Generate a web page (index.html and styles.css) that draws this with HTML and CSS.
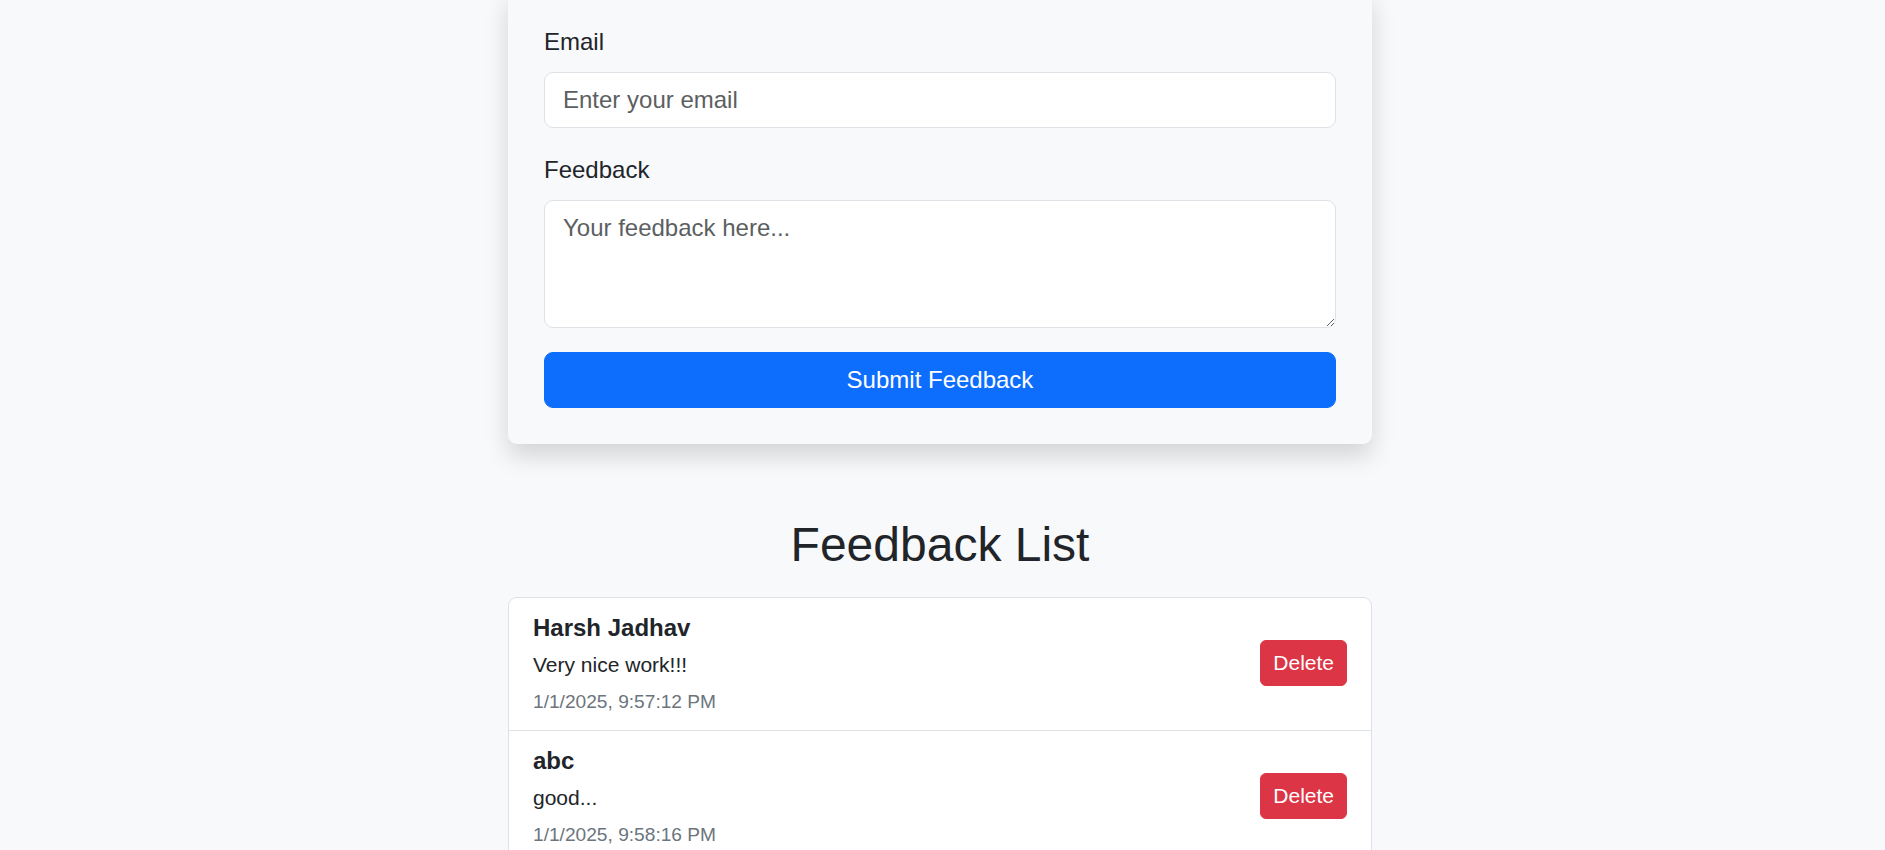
FILE: index.html
```html
<!DOCTYPE html>
<html lang="en">
<head>
<meta charset="utf-8">
<title>Feedback</title>
<link rel="stylesheet" href="styles.css">
</head>
<body>
<div class="page">
  <form class="form-card">
    <div class="field">
      <label class="field-label" for="email">Email</label>
      <input class="field-input" id="email" type="email" placeholder="Enter your email">
    </div>
    <div class="field">
      <label class="field-label" for="feedback">Feedback</label>
      <textarea class="field-input field-textarea" id="feedback" placeholder="Your feedback here..."></textarea>
    </div>
    <button class="btn-submit" type="button">Submit Feedback</button>
  </form>

  <h2 class="list-title">Feedback List</h2>

  <ul class="feedback-list">
    <li class="feedback-item">
      <div class="feedback-body">
        <div class="feedback-name">Harsh Jadhav</div>
        <div class="feedback-text">Very nice work!!!</div>
        <div class="feedback-date">1/1/2025, 9:57:12 PM</div>
      </div>
      <button class="btn-delete" type="button">Delete</button>
    </li>
    <li class="feedback-item">
      <div class="feedback-body">
        <div class="feedback-name">abc</div>
        <div class="feedback-text">good...</div>
        <div class="feedback-date">1/1/2025, 9:58:16 PM</div>
      </div>
      <button class="btn-delete" type="button">Delete</button>
    </li>
  </ul>
</div>
</body>
</html>
```

FILE: styles.css
```css
html {
  overflow: hidden;
}

body {
  margin: 0;
  padding: 0 5px 0 0;
  background: #f8f9fa;
  color: #212529;
  font-family: "Liberation Sans", Arial, sans-serif;
  font-size: 24px;
  line-height: 1.5;
}

.page {
  width: 864px;
  margin: 0 auto;
}

.form-card {
  margin: -12px 0 0;
  padding: 36px;
  background: #f8f9fa;
  border-radius: 9px;
  box-shadow: 0 12px 24px rgba(0, 0, 0, 0.15);
}

.field {
  margin-bottom: 24px;
}

.field-label {
  display: block;
  margin-bottom: 12px;
  font-size: 24px;
  line-height: 36px;
  color: #212529;
}

.field-input {
  display: block;
  box-sizing: border-box;
  width: 100%;
  height: 56px;
  margin: 0;
  padding: 9px 18px;
  font-family: inherit;
  font-size: 24px;
  line-height: 36px;
  color: #212529;
  background: #fff;
  border: 1px solid #dee2e6;
  border-radius: 9px;
  outline: none;
}

.field-input::placeholder {
  color: #5c5f62;
  opacity: 1;
}

.field-textarea {
  height: 128px;
  resize: vertical;
}

.btn-submit {
  display: block;
  box-sizing: border-box;
  width: 100%;
  height: 56px;
  margin: 0;
  padding: 9px 18px;
  font-family: inherit;
  font-size: 24px;
  line-height: 36px;
  color: #fff;
  background: #0d6efd;
  border: 1px solid #0d6efd;
  border-radius: 9px;
  cursor: pointer;
}

.list-title {
  margin: 72px 0 23px;
  font-size: 48px;
  font-weight: 400;
  line-height: 57.6px;
  text-align: center;
  color: #212529;
}

.feedback-list {
  list-style: none;
  margin: 0;
  padding: 0;
  background: #fff;
  border: 1px solid #dee2e6;
  border-radius: 9px;
}

.feedback-item {
  display: flex;
  align-items: center;
  justify-content: space-between;
  padding: 12px 24px 14px;
}

.feedback-item + .feedback-item {
  border-top: 1px solid #dee2e6;
}

.feedback-name {
  font-size: 24px;
  font-weight: 700;
  line-height: 36px;
  margin-bottom: 3px;
}

.feedback-text {
  font-size: 21px;
  line-height: 32px;
  margin-bottom: 7px;
}

.feedback-date {
  font-size: 19.15px;
  line-height: 28px;
  color: #6c757d;
}

.btn-delete {
  box-sizing: border-box;
  height: 46px;
  padding: 6px 12px;
  font-family: inherit;
  font-size: 21px;
  line-height: 32px;
  color: #fff;
  background: #dc3545;
  border: 1px solid #dc3545;
  border-radius: 6px;
  cursor: pointer;
}
```
